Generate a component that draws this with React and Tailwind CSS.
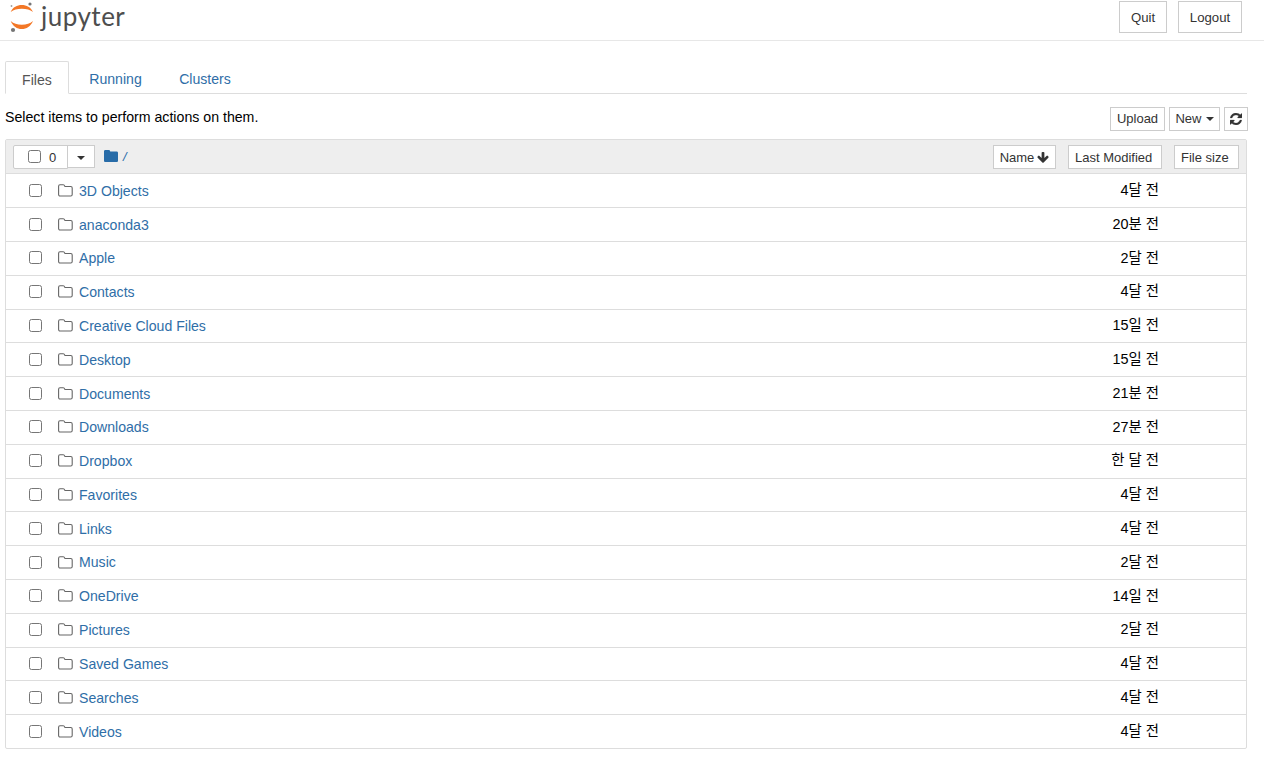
const rows = [
  ["3D Objects", "4달 전"],
  ["anaconda3", "20분 전"],
  ["Apple", "2달 전"],
  ["Contacts", "4달 전"],
  ["Creative Cloud Files", "15일 전"],
  ["Desktop", "15일 전"],
  ["Documents", "21분 전"],
  ["Downloads", "27분 전"],
  ["Dropbox", "한 달 전"],
  ["Favorites", "4달 전"],
  ["Links", "4달 전"],
  ["Music", "2달 전"],
  ["OneDrive", "14일 전"],
  ["Pictures", "2달 전"],
  ["Saved Games", "4달 전"],
  ["Searches", "4달 전"],
  ["Videos", "4달 전"],
];

function Logo() {
  return (
    <svg width="24" height="31" viewBox="0 0 24 31" className="block">
      <path d="M.7 10C3 5 7 3 11.8 3S20.600 5 23 10C20 7.800 16.500 6.800 11.800 6.800S3.700 7.800.7 10Z" fill="#f37726" />
      <path d="M.7 19C3 24.500 7 27 11.800 27S20.600 24.500 23 19C20 21.600 16.500 22.800 11.800 22.800S3.700 21.600.7 19Z" fill="#f37726" />
      <circle cx="20" cy="2" r="1.600" fill="#767677" />
      <circle cx="3" cy="28" r="2.100" fill="#757575" />
      <circle cx="1.500" cy="4" r=".9" fill="#9e9e9e" />
    </svg>
  );
}

function FolderOutline() {
  return (
    <svg width="15" height="13" viewBox="0 0 15 13" className="block shrink-0" fill="none" stroke="#666" strokeWidth="1.1">
      <path d="M2 .8h3.200c.9 0 1.300.5 1.600 1.400l.1.3h5.900c.8 0 1.400.6 1.400 1.400v6.700c0 .8-.6 1.400-1.400 1.400H2c-.8 0-1.400-.6-1.400-1.400V2.200C.6 1.400 1.200.8 2 .8Z" />
    </svg>
  );
}

function FolderSolid() {
  return (
    <svg width="14" height="12" viewBox="0 0 14 12" className="block shrink-0" fill="#286ca8">
      <path d="M1.300 0h3.500c.8 0 1.200.5 1.400 1.500h6.500c.7 0 1.300.6 1.300 1.300v7.900c0 .7-.6 1.300-1.300 1.300H1.300C.6 12 0 11.400 0 10.700V1.300C0 .6.600 0 1.300 0Z" />
    </svg>
  );
}

function Caret() {
  return <span className="inline-block w-0 h-0 border-x-[4.5px] border-x-transparent border-t-[4.5px] border-t-[#333]" />;
}

function Refresh() {
  return (
    <svg width="12" height="12" viewBox="0 0 1536 1536" fill="#333" stroke="#333" strokeWidth="30" className="block">
      <path d="M1511 928q0 5-1 7-64 268-268 434.500T764 1536q-146 0-282.500-55T238 1324l-129 129q-19 19-45 19t-45-19-19-45V960q0-26 19-45t45-19h448q26 0 45 19t19 45-19 45l-137 137q71 66 161 102t187 36q134 0 250-65t186-179q11-17 53-117 8-23 30-23h192q13 0 22.500 9.500t9.500 22.500zm25-800v448q0 26-19 45t-45 19h-448q-26 0-45-19t-19-45 19-45l138-138Q969 256 768 256q-134 0-250 65T332 500q-11 17-53 117-8 23-30 23H50q-13 0-22.500-9.500T18 608v-7q65-268 270-434.500T768 0q146 0 284 55.500T1297 212l130-129q19-19 45-19t45 19 19 45z" />
    </svg>
  );
}

function ArrowDown() {
  return (
    <svg width="12" height="12" viewBox="0 0 1664 1664" fill="#333" className="block">
      <path d="M1611 704q0 53-37 90l-651 652q-39 37-91 37-53 0-90-37L91 794q-38-36-38-90 0-53 38-91l74-75q39-37 91-37 53 0 90 37l294 294V128q0-52 38-90t90-38h128q52 0 90 38t38 90v704l294-294q37-37 90-37 52 0 91 37l75 75q37 39 37 91z" />
    </svg>
  );
}

function XsButton({ className = "", children }) {
  return (
    <div className={`flex items-center h-[24px] bg-white border border-[#ccc] text-[13px] text-[#333] ${className}`}>
      {children}
    </div>
  );
}

function Checkbox({ className = "" }) {
  return <span className={`block w-[13px] h-[13px] shrink-0 bg-white border border-[#767676] rounded-[2.5px] ${className}`} />;
}

export default function App() {
  return (
    <div className="w-[1264px] h-[759px] overflow-hidden bg-white text-[14.1px] text-black" style={{ fontFamily: '"Liberation Sans", "Noto Sans CJK KR", sans-serif' }}>
      <header className="h-[41px] border-b border-[#e7e7e7] flex items-start justify-between pl-[10px] pr-[22px]">
        <div className="flex items-start pt-[2px] gap-[7px]">
          <Logo />
          <span className="text-[26px] leading-[28px] text-[#4e4e4e] tracking-[0.5px]" style={{ fontFamily: '"Lato", sans-serif' }}>jupyter</span>
        </div>
        <div className="flex gap-[11px] pt-px text-[13.2px]">
          <div className="flex items-center justify-center w-[48px] h-[32px] pt-[2px] border border-[#ccc] text-[#333]">Quit</div>
          <div className="flex items-center justify-center w-[64px] h-[32px] pt-[2px] border border-[#ccc] text-[#333]">Logout</div>
        </div>
      </header>

      <main className="pl-[5px] pr-[17px]">
        <nav className="mt-[20px] h-[33px] flex items-end border-b border-[#ddd]">
          <div className="w-[64px] h-[33px] -mb-px pt-[7px] flex items-center justify-center bg-white border border-[#ddd] border-b-white rounded-t-[2px] text-[#555]">Files</div>
          <div className="w-[93px] h-[33px] pt-[7px] flex items-center justify-center text-[#2f6ea7]">Running</div>
          <div className="w-[86px] h-[33px] pt-[7px] flex items-center justify-center text-[#2f6ea7]">Clusters</div>
        </nav>

        <div className="h-[45px] flex items-start justify-between">
          <span className="mt-[15px] leading-[16px] text-[14.16px]">Select items to perform actions on them.</span>
          <div className="flex gap-[4px] mt-[13px] mr-[-1px]">
            <XsButton className="w-[55px] justify-center">Upload</XsButton>
            <XsButton className="w-[51px] justify-center gap-[4px]">New <Caret /></XsButton>
            <XsButton className="w-[24px] justify-center"><Refresh /></XsButton>
          </div>
        </div>

        <section className="border border-[#ddd] rounded-[2px]">
          <div className="h-[34.4px] bg-[#eee] border-b border-[#ddd] flex items-center pl-[7px] pr-[7px]">
            <div className="flex items-center">
              <div className="w-[55px] h-[24px] bg-white border border-[#ccc] rounded-l-[2px] flex items-center pl-[14px] text-[13px] text-[#333]">
                <Checkbox />
                <span className="ml-[8px] pt-[2px]">0</span>
              </div>
              <div className="w-[28px] h-[23px] -ml-px pt-[2px] bg-white border border-[#ccc] flex items-center justify-center"><Caret /></div>
            </div>
            <div className="ml-[9px] flex items-center gap-[5px] text-[#555] -mt-[2px]">
              <FolderSolid />
              <span className="italic text-[#286ca8] leading-none text-[13px] pt-[2px]">/</span>
            </div>
            <div className="ml-auto flex items-center">
              <XsButton className="w-[63px] pt-[2px] justify-center gap-[3px]">Name <ArrowDown /></XsButton>
              <XsButton className="w-[94px] ml-[12px] pt-[2px] pl-[6px]">Last Modified</XsButton>
              <XsButton className="w-[65px] ml-[12px] pt-[2px] pl-[6px]">File size</XsButton>
            </div>
          </div>
          {rows.map(([name, date], i) => (
            <div key={name} className={`flex items-center pl-[23px] ${i < rows.length - 1 ? "h-[33.81px] border-b border-[#ddd]" : "h-[33px]"}`}>
              <Checkbox className="mb-[1px]" />
              <span className="ml-[16px] mb-[1px]"><FolderOutline /></span>
              <span className="ml-[6px] mt-[1px] text-[#2f6ea7]">{name}</span>
              <span className="ml-auto mr-[87px] text-[14.4px]">{date}</span>
            </div>
          ))}
        </section>
      </main>
    </div>
  );
}
